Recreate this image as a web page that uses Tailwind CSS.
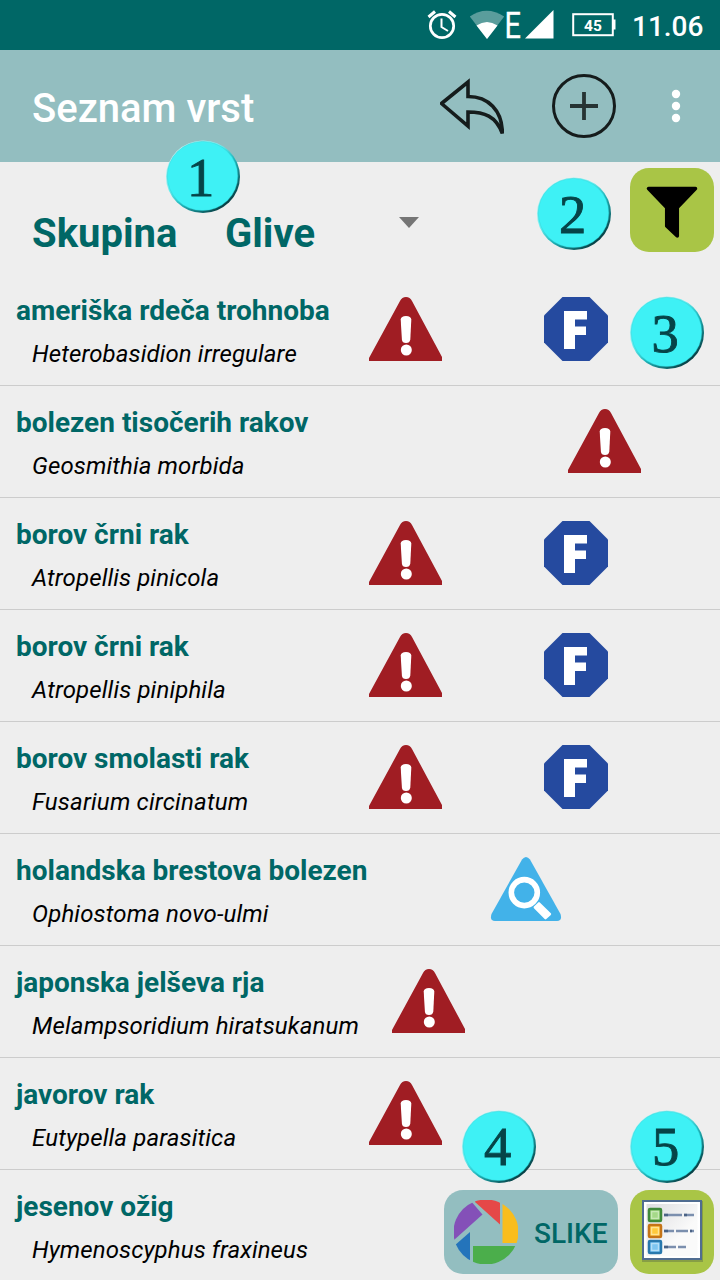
<!DOCTYPE html>
<html lang="sl">
<head>
<meta charset="utf-8">
<title>Seznam vrst</title>
<script src="https://cdn.jsdelivr.net/npm/@tailwindcss/browser@4"></script>
</head>
<body class="w-[720px] h-[1280px] overflow-hidden bg-[#eeeeee] font-['Roboto',sans-serif]">
<svg class="absolute size-0">
  <symbol id="warn" viewBox="0 0 73 64"><path fill="#a01d23" d="M0 64V61L31 4Q33 0 37 0T43 4L73 60V64Z"/><path fill="#fff" d="M31.700 22.500Q32 19 37 19T42.300 22.500L41.300 42.500Q40.800 46 37 46T32.900 42.500Z"/><circle cx="37.300" cy="53" r="5.500" fill="#fff"/></symbol>
  <symbol id="oct" viewBox="0 0 64 64"><path fill="#254a9f" d="M18.500 0H45.500L64 18.500V45.500L45.500 64H18.500L0 45.500V18.500Z"/><path fill="#fff" d="M20 14H43V22.500H31V29.500H42V38H31V52H20Z"/></symbol>
  <linearGradient id="rim" x1=".15" y1=".1" x2=".85" y2=".9"><stop stop-color="#c4f6f6"/><stop offset=".35" stop-color="#66eef0"/><stop offset=".6" stop-color="#1fb3b8"/><stop offset="1" stop-color="#04353a"/></linearGradient>
  <symbol id="disc" viewBox="0 0 76 76"><ellipse cx="38" cy="36.700" rx="37" ry="36.300" fill="url(#rim)"/><ellipse cx="37.500" cy="36" rx="35.300" ry="34.600" fill="#3ef1f5" stroke="#2bcdd2" stroke-width=".8" stroke-opacity=".5"/></symbol>
</svg>
<div class="relative w-[720px] h-[1280px] overflow-hidden">
  <header>
    <div class="h-[50px] bg-[#006766] flex items-start">
      <svg class="ml-[424px] shrink-0" width="36" height="50" fill="none" stroke="#fff"><circle cx="18" cy="26" r="11.700" stroke-width="2.700"/><path d="M17.500 18.500V27L24 31" stroke-width="2"/><path d="M4.500 17L11 11.500M31.500 17L25 11.500" stroke-width="3"/></svg>
      <svg class="ml-[9px] shrink-0" width="36" height="50"><path fill="#5a9d9c" d="M0.800 16.500Q17.500 5 35.200 16.500L18 39Z"/><path fill="#fff" d="M7.500 25.500Q18 18.500 28.500 25.500L18 39Z"/></svg>
      <svg class="shrink-0" width="20" height="50"><text x="-0.500" y="38" font-size="36.500" font-weight="400" fill="#fff" stroke="#fff" stroke-width=".3" textLength="16.500" lengthAdjust="spacingAndGlyphs">E</text></svg>
      <svg class="shrink-0" width="30" height="50"><path fill="#fff" d="M0 38.500L28.500 10V38.500Z"/></svg>
      <svg class="ml-[17px] shrink-0" width="44" height="50"><rect x="1.200" y="14.200" width="39.600" height="21" fill="none" stroke="#fff" stroke-width="2"/><path fill="#fff" d="M41 19.500H43.500V29.500H41Z"/><text x="21" y="31" text-anchor="middle" font-size="15.500" font-weight="700" fill="#fff">45</text></svg>
      <span class="ml-[16px] mt-[11px] text-[28px] leading-[32px] font-medium text-white">11.06</span>
    </div>
    <div class="h-[112px] bg-[#93bec0] flex items-center pl-8">
      <h1 class="w-[408px] pt-[6px] text-[40px] leading-[48px] font-medium text-white">Seznam vrst</h1>
      <svg width="64" height="64" fill="none" stroke="#151c1c" stroke-width="3.600"><path d="M1.500 29.500L28 8V22.500C48 22.500 62.500 36 62.300 59.500C56 42 44 38 28 38V52Z"/></svg>
      <svg class="ml-12" width="64" height="64" fill="none" stroke="#151c1c"><circle cx="32" cy="32" r="30.500" stroke-width="3"/><path d="M18 32H46M32 18V46" stroke="#263333" stroke-width="3.800"/></svg>
      <svg class="ml-[52px]" width="16" height="40" fill="#fff"><circle cx="8" cy="8" r="4.200"/><circle cx="8" cy="20" r="4.200"/><circle cx="8" cy="32" r="4.200"/></svg>
    </div>
  </header>
  <section class="h-[112px] flex items-start pl-8 text-[40px] leading-[48px] font-bold text-[#006766]">
    <span class="w-[193px] mt-[48px]">Skupina</span>
    <span class="w-[174px] mt-[48px]">Glive</span>
    <svg class="mt-[55px]" width="20" height="12"><path fill="#757575" d="M0 0H20L10 11Z"/></svg>
    <button class="ml-[211px] mt-[6px] size-[84px] rounded-[19px] bg-[#a9c546]"><svg width="84" height="84"><path stroke="#000" stroke-width="3.500" stroke-linejoin="round" d="M18.500 20.500H65.500L47.300 39.500V68L36.700 58V39.500Z"/></svg></button>
  </section>
  <main class="text-[#006766] text-[28px] leading-8 font-bold whitespace-nowrap">
    <div class="h-[112px] border-b border-[#cccccc] flex pt-5">
      <div class="w-[369px] pl-4 pt-px">ameriška rdeča trohnoba<p class="mt-[13px] pl-4 text-2xl leading-7 font-normal italic tracking-[0.12px] text-black">Heterobasidion irregulare</p></div>
      <svg class="mt-[3px]" width="73" height="64"><use href="#warn"/></svg><svg class="mt-[3px] ml-[102px]" width="64" height="64"><use href="#oct"/></svg>
    </div>
    <div class="h-[112px] border-b border-[#cccccc] flex pt-5">
      <div class="w-[568px] pl-4 pt-px">bolezen tisočerih rakov<p class="mt-[13px] pl-4 text-2xl leading-7 font-normal italic tracking-[0.12px] text-black">Geosmithia morbida</p></div>
      <svg class="mt-[3px]" width="73" height="64"><use href="#warn"/></svg>
    </div>
    <div class="h-[112px] border-b border-[#cccccc] flex pt-5">
      <div class="w-[369px] pl-4 pt-px">borov črni rak<p class="mt-[13px] pl-4 text-2xl leading-7 font-normal italic tracking-[0.12px] text-black">Atropellis pinicola</p></div>
      <svg class="mt-[3px]" width="73" height="64"><use href="#warn"/></svg><svg class="mt-[3px] ml-[102px]" width="64" height="64"><use href="#oct"/></svg>
    </div>
    <div class="h-[112px] border-b border-[#cccccc] flex pt-5">
      <div class="w-[369px] pl-4 pt-px">borov črni rak<p class="mt-[13px] pl-4 text-2xl leading-7 font-normal italic tracking-[0.14px] text-black">Atropellis piniphila</p></div>
      <svg class="mt-[3px]" width="73" height="64"><use href="#warn"/></svg><svg class="mt-[3px] ml-[102px]" width="64" height="64"><use href="#oct"/></svg>
    </div>
    <div class="h-[112px] border-b border-[#cccccc] flex pt-5">
      <div class="w-[369px] pl-4 pt-px">borov smolasti rak<p class="mt-[13px] pl-4 text-2xl leading-7 font-normal italic tracking-[0.2px] text-black">Fusarium circinatum</p></div>
      <svg class="mt-[3px]" width="73" height="64"><use href="#warn"/></svg><svg class="mt-[3px] ml-[102px]" width="64" height="64"><use href="#oct"/></svg>
    </div>
    <div class="h-[112px] border-b border-[#cccccc] flex pt-5">
      <div class="w-[490px] pl-4 pt-px">holandska brestova bolezen<p class="mt-[13px] pl-4 text-2xl leading-7 font-normal italic tracking-[0.14px] text-black">Ophiostoma novo-ulmi</p></div>
      <svg class="mt-[3px]" width="72" height="64"><path fill="#42b2e9" d="M32 2.500Q36 -2.500 40 2.500L70.500 57Q72.500 64 67 64H5Q-.5 64 1.500 57Z"/><circle cx="34.300" cy="35.600" r="13" fill="none" stroke="#fff" stroke-width="5.600"/><path fill="#fff" stroke="#fff" stroke-width="2.400" stroke-linejoin="round" d="M44.800 50.300L49 46.300L60 57L55.500 61.200Z"/></svg>
    </div>
    <div class="h-[112px] border-b border-[#cccccc] flex pt-5">
      <div class="w-[392px] pl-4 pt-px">japonska jelševa rja<p class="mt-[13px] pl-4 text-2xl leading-7 font-normal italic tracking-[0.16px] text-black">Melampsoridium hiratsukanum</p></div>
      <svg class="mt-[3px]" width="73" height="64"><use href="#warn"/></svg>
    </div>
    <div class="h-[112px] border-b border-[#cccccc] flex pt-5">
      <div class="w-[369px] pl-4 pt-px">javorov rak<p class="mt-[13px] pl-4 text-2xl leading-7 font-normal italic tracking-[0.14px] text-black">Eutypella parasitica</p></div>
      <svg class="mt-[3px]" width="73" height="64"><use href="#warn"/></svg>
    </div>
    <div class="h-[112px] flex pt-5">
      <div class="w-[369px] pl-4 pt-px">jesenov ožig<p class="mt-[13px] pl-4 text-2xl leading-7 font-normal italic tracking-[0.1px] text-black">Hymenoscyphus fraxineus</p></div>
    </div>
  </main>

  <div class="absolute left-[444px] top-[1190px] flex gap-3">
    <button class="w-[174px] h-[84px] rounded-[19px] bg-[#93bec0] flex items-center pl-[10px] text-[28px] leading-8 font-medium text-[#006766]">
      <svg width="64" height="64"><defs><clipPath id="round"><circle cx="32" cy="32" r="32.500"/></clipPath></defs><g clip-path="url(#round)"><path fill="#e54848" d="M21 2V0H46V24.500Z"/><path fill="#f9bd1d" d="M48.500 0H64V43H48.500Z"/><path fill="#4bae4b" d="M19 46H64V64H19Z"/><path fill="#2474bb" d="M0 46L16 32V64H0Z"/><path fill="#8450b8" d="M0 0H16L28.500 14.500L0 40Z"/></g></svg>
      <span class="ml-4 pt-1">SLIKE</span>
    </button>
    <button class="size-[84px] rounded-[19px] bg-[#a9c546]">
      <svg width="84" height="84"><defs><linearGradient id="paper" x2="1" y2="1"><stop stop-color="#dcdddf"/><stop offset=".65" stop-color="#fafafa"/></linearGradient></defs>
        <rect x="12" y="11" width="61" height="61" fill="#718444" opacity=".6"/><rect x="13" y="11" width="58" height="58" fill="#fff" stroke="#506d91" stroke-width="2"/><rect x="16.500" y="14" width="51" height="52" fill="url(#paper)"/>
        <g stroke-width="2.500"><rect x="19" y="19" width="12" height="12" rx="1" fill="#8ac86a" stroke="#408a3a"/><rect x="19" y="35" width="12" height="12" rx="1" fill="#fab62b" stroke="#c57416"/><rect x="19" y="51" width="12" height="12" rx="1" fill="#62b6ec" stroke="#2878ad"/></g>
        <g fill="none" stroke-width="1.500"><rect x="21.500" y="21.500" width="7" height="7" fill="#a5d989" stroke="#c8e9b6"/><rect x="21.500" y="37.500" width="7" height="7" fill="#ffc93a" stroke="#ffe391"/><rect x="21.500" y="53.500" width="7" height="7" fill="#7dc5f1" stroke="#b4def7"/></g>
        <path stroke="#7b8fae" stroke-width="2.400" d="M34 25H52M54 25H64M34 41H44M46 41H58M60 41H64M34 57H46M48 57H56"/><path stroke="#4b6385" stroke-width="2.400" d="M34 25H38M54 25H57M34 41H38M34 57H38M60 41H62"/>
      </svg>
    </button>
  </div>

  <svg class="absolute left-[165px] top-[140px]" width="76" height="76"><use href="#disc"/><text x="35.500" y="55.500" text-anchor="middle" font-family="Liberation Serif, serif" font-size="54.500" fill="#064448" stroke="#064448" stroke-width=".9">1</text></svg>
  <svg class="absolute left-[536px] top-[177px]" width="76" height="76"><use href="#disc"/><text x="36.500" y="55.500" text-anchor="middle" font-family="Liberation Serif, serif" font-size="54.500" fill="#064448" stroke="#064448" stroke-width=".9">2</text></svg>
  <svg class="absolute left-[629px] top-[296px]" width="76" height="76"><use href="#disc"/><text x="36" y="56" text-anchor="middle" font-family="Liberation Serif, serif" font-size="54.500" fill="#064448" stroke="#064448" stroke-width=".9">3</text></svg>
  <svg class="absolute left-[461px] top-[1110px]" width="76" height="76"><use href="#disc"/><text x="36.500" y="54.500" text-anchor="middle" font-family="Liberation Serif, serif" font-size="54.500" fill="#064448" stroke="#064448" stroke-width=".9">4</text></svg>
  <svg class="absolute left-[629px] top-[1110px]" width="76" height="76"><use href="#disc"/><text x="36.500" y="55" text-anchor="middle" font-family="Liberation Serif, serif" font-size="54.500" fill="#064448" stroke="#064448" stroke-width=".9">5</text></svg>
</div>
</body>
</html>
